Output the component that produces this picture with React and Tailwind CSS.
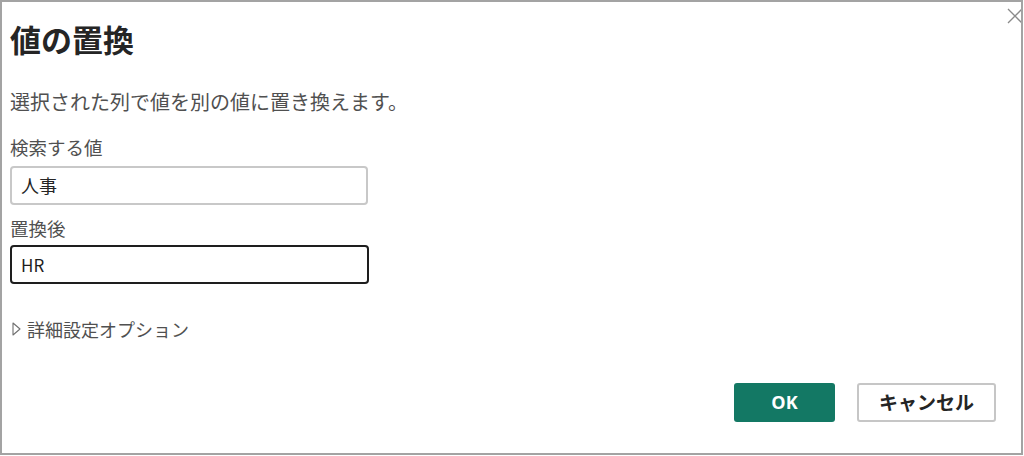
export default function App() {
  const font = { fontFamily: '"Noto Sans CJK JP", "Noto Sans", sans-serif' };
  return (
    <div className="w-[1024px] h-[456px] bg-white" style={font}>
      <div className="relative w-[1023px] h-[455px] border-2 border-[#a3a3a3] bg-white pl-[8px] pt-[15px]">
        <svg className="absolute right-[0px] top-[6px]" width="14" height="16" viewBox="0 0 14 16">
          <path d="M1 1 L15 15 M15 1 L1 15" stroke="#8a8a8a" strokeWidth="1.3" fill="none" />
        </svg>
        <h1 className="text-[31px] leading-[44px] font-bold text-[#252525]">値の置換</h1>
        <p className="mt-[28px] text-[20px] leading-[26px] text-[#505050]">選択された列で値を別の値に置き換えます。</p>
        <div className="mt-[20px] text-[18.5px] leading-[24px] text-[#505050]">検索する値</div>
        <div className="mt-[7px] w-[358px] h-[39px] rounded-[4px] border-2 border-[#c8c8c8] flex items-center pl-[9px] text-[18px] text-[#252525]">人事</div>
        <div className="mt-[11px] text-[18.5px] leading-[24px] text-[#505050]">置換後</div>
        <div className="mt-[5px] w-[359px] h-[39px] rounded-[4px] border-2 border-[#1e1e1e] flex items-center pl-[9px] text-[17px] text-[#1e1e1e]">HR</div>
        <div className="mt-[33px] flex items-center gap-[6px] text-[18px] leading-[24px] text-[#505050]">
          <svg width="9" height="14" viewBox="0 0 9 14" className="ml-[2px]">
            <path d="M1 1 L8 7 L1 13 Z" stroke="#707070" strokeWidth="1.1" fill="none" strokeLinejoin="round" />
          </svg>
          <span>詳細設定オプション</span>
        </div>
        <div className="absolute left-0 right-0 bottom-[31px] flex justify-end items-center pr-[25px] gap-[22px]">
          <button className="w-[101px] h-[39px] rounded-[3px] bg-[#137864] text-white font-bold text-[18px]" style={{ fontFamily: '"Open Sans", "Noto Sans CJK JP", sans-serif' }}>OK</button>
          <button className="w-[139px] h-[39px] rounded-[3px] border-2 border-[#c6c6c6] bg-white text-[#252525] font-bold text-[19px]">キャンセル</button>
        </div>
      </div>
    </div>
  );
}
